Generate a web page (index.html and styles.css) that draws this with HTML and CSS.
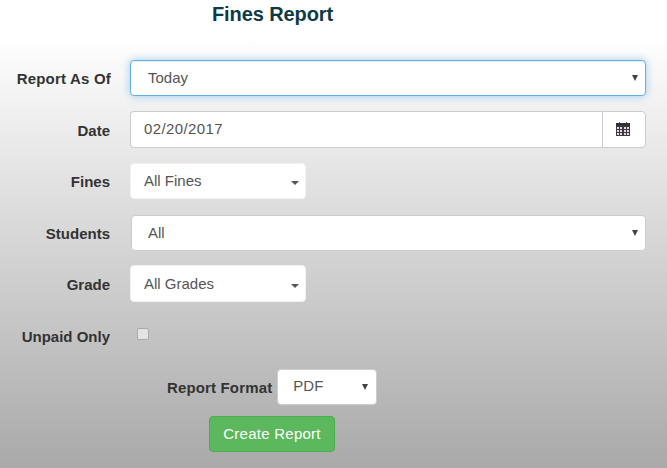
FILE: index.html
```html
<!DOCTYPE html>
<html lang="en">
<head>
<meta charset="utf-8">
<title>Fines Report</title>
<link rel="stylesheet" href="styles.css">
</head>
<body>
<h1 class="title">Fines Report</h1>
<form class="form">
  <div class="row row-first">
    <label class="label label-long">Report As Of</label>
    <div class="select-wrap wide focus"><select class="control indent"><option>Today</option></select><span class="arrow"></span></div>
  </div>
  <div class="row">
    <label class="label label-date">Date</label>
    <div class="input-group">
      <input class="date-input" type="text" value="02/20/2017">
      <span class="addon">
        <svg width="14" height="15" viewBox="0 0 14 15" aria-hidden="true">
          <rect x="3" y="0" width="1" height="2" fill="#b0503a"/>
          <rect x="10" y="0" width="1" height="2" fill="#b0503a"/>
          <rect x="0" y="1" width="14" height="3" fill="#333"/>
          <rect x="0" y="4" width="14" height="10" fill="#3a3a4a"/>
          <g fill="#e6d8d2">
            <rect x="1" y="5" width="2" height="2"/><rect x="4" y="5" width="2" height="2"/><rect x="8" y="5" width="2" height="2"/><rect x="11" y="5" width="2" height="2"/>
            <rect x="1" y="8" width="2" height="2"/><rect x="4" y="8" width="2" height="2"/><rect x="8" y="8" width="2" height="2"/><rect x="11" y="8" width="2" height="2"/>
            <rect x="1" y="11" width="2" height="2"/><rect x="4" y="11" width="2" height="2"/><rect x="8" y="11" width="2" height="2"/><rect x="11" y="11" width="2" height="2"/>
          </g>
        </svg>
      </span>
    </div>
  </div>
  <div class="row row-fines">
    <label class="label">Fines</label>
    <div class="dropdown"><span>All Fines</span><span class="caret"></span></div>
  </div>
  <div class="row row-students">
    <label class="label">Students</label>
    <div class="select-wrap wide inset"><select class="control indent"><option>All</option></select><span class="arrow"></span></div>
  </div>
  <div class="row row-grade">
    <label class="label">Grade</label>
    <div class="dropdown"><span>All Grades</span><span class="caret"></span></div>
  </div>
  <div class="row row-unpaid">
    <label class="label">Unpaid Only</label>
    <input class="check" type="checkbox">
  </div>
  <div class="format-row">
    <label class="format-label">Report Format</label>
    <div class="select-wrap narrow"><select class="control indent"><option>PDF</option></select><span class="arrow"></span></div>
  </div>
  <div class="action"><button class="btn" type="button">Create Report</button></div>
</form>
</body>
</html>
```

FILE: styles.css
```css
* { box-sizing: border-box; }
html, body { margin: 0; height: 468px; overflow: hidden; }
body {
  width: 667px;
  font-family: "Liberation Sans", Arial, sans-serif;
  font-size: 15px;
  color: #333;
  background: linear-gradient(to bottom, #fff 0, #fff 36px, #a9a9a9 468px);
}
.title {
  margin: 0;
  padding: 3px 0 0 212px;
  height: 60px;
  font-size: 20px;
  line-height: 22px;
  font-weight: bold;
  letter-spacing: -0.1px;
  color: #0f3a45;
}
.form { display: flex; flex-direction: column; }
.row { display: flex; align-items: center; height: 36px; margin-bottom: 15px; }
.row-fines { margin-top: 1px; }
.row-students { margin-top: 1px; margin-bottom: 15px; }
.row-grade { margin-bottom: 20px; }
.row-unpaid { height: 28px; margin-bottom: 19px; }
.label {
  width: 110px;
  margin-right: 20px;
  flex: none;
  text-align: right;
  font-weight: bold;
  font-size: 15px;
}
.label-long { width: 111px; margin-right: 19px; letter-spacing: 0.2px; }
.label-date { padding-top: 2px; }
.select-wrap { position: relative; height: 36px; }
.wide { width: 516px; }
.inset { width: 515px; margin-left: 1px; }
.narrow { width: 100px; }
.control {
  display: block;
  width: 100%;
  height: 100%;
  appearance: none;
  -webkit-appearance: none;
  border: 1px solid #ccc;
  border-radius: 4px;
  background: #fff;
  color: #555;
  font: 15px "Liberation Sans", Arial, sans-serif;
  outline: none;
}
.indent { padding: 0 24px 2px 17px; }
.inset .indent { padding-left: 16px; }
.narrow .indent { padding-left: 15px; padding-bottom: 3px; }
.focus .control {
  border-color: #66afe9;
  box-shadow: inset 0 1px 1px rgba(0,0,0,.075), 0 0 8px rgba(102,175,233,.6);
}
.arrow {
  position: absolute;
  right: 8px;
  top: 15px;
  border-style: solid;
  border-width: 6px 3px 0;
  border-color: #444 transparent transparent;
}
.narrow .arrow { right: 9px; }
.input-group { display: flex; width: 516px; height: 37px; }
.date-input {
  flex: 1;
  min-width: 0;
  height: 37px;
  padding: 0 13px 2px;
  border: 1px solid #ccc;
  border-right: 0;
  border-radius: 4px 0 0 4px;
  background: #fff;
  color: #555;
  font: 15px "Liberation Sans", Arial, sans-serif;
  letter-spacing: 0.4px;
}
.addon {
  display: flex;
  align-items: center;
  justify-content: center;
  width: 44px;
  padding-right: 2px;
  border: 1px solid #ccc;
  border-radius: 0 4px 4px 0;
  background: #fff;
}
.dropdown {
  display: flex;
  align-items: center;
  justify-content: space-between;
  width: 176px;
  height: 37px;
  padding: 0 6px 0 13px;
  border: 1px solid #f2f2f2;
  border-radius: 4px;
  background: #fff;
  color: #555;
}
.row-fines .dropdown { height: 36px; padding-bottom: 2px; }
.row-fines .caret { margin-top: 6px; }
.row-grade .dropdown { margin-top: -1px; }
.caret {
  margin-top: 4px;
  border-style: solid;
  border-width: 4px 4px 0;
  border-color: #555 transparent transparent;
}
.check {
  width: 12px;
  height: 12px;
  margin: -4px 0 0 7px;
  appearance: none;
  -webkit-appearance: none;
  border: 1px solid #aaa;
  border-radius: 2px;
  background: #e4e4e4;
}
.format-row { display: flex; align-items: center; margin-left: 167px; height: 36px; }
.format-label {
  margin-right: 5px;
  font-weight: bold;
  font-size: 15px;
  letter-spacing: 0.15px;
}
.action { margin: 11px 0 0 209px; }
.btn {
  display: block;
  width: 126px;
  height: 36px;
  padding: 0 0 2px;
  border: 1px solid #4cae4c;
  border-radius: 4px;
  background: #5cb85c;
  color: #fff;
  font: 15px "Liberation Sans", Arial, sans-serif;
  letter-spacing: 0.25px;
}
```
